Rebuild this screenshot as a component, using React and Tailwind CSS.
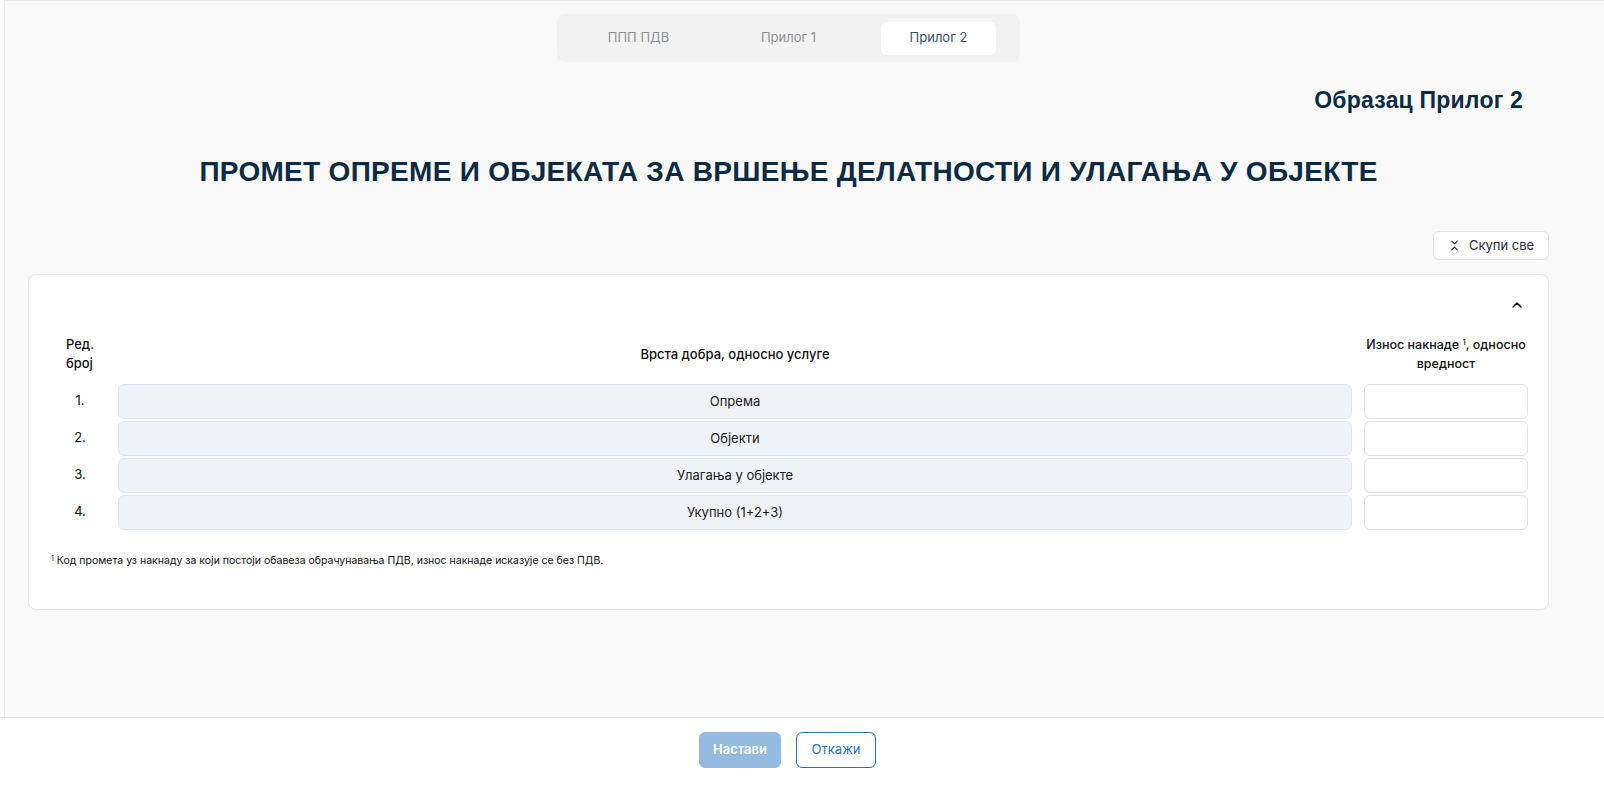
import React from "react";
import { ChevronsDownUp, ChevronUp } from "lucide-react";

const rows = [
  ["1.", "Опрема"],
  ["2.", "Објекти"],
  ["3.", "Улагања у објекте"],
  ["4.", "Укупно (1+2+3)"],
];

export default function App() {
  return (
    <div className="h-[787px] w-[1604px] flex flex-col bg-white overflow-hidden" style={{ fontFamily: "Inter, 'Liberation Sans', sans-serif" }}>
      <div className="flex-1 ml-[4px] border-l border-t border-[#ececec] bg-[#f9f9f9]">
        <div className="w-[1566px] pl-[23px] pr-[22px] flex flex-col">
          <div className="flex justify-center pt-[13px]">
            <div className="flex items-center gap-[35px] h-[48px] px-[24px] bg-[#f2f2f2] rounded-lg">
              <div className="w-[115px] h-[33px] flex items-center justify-center text-[13px] text-[#8c9196]">ППП ПДВ</div>
              <div className="w-[115px] h-[33px] flex items-center justify-center text-[13px] text-[#8c9196]">Прилог 1</div>
              <div className="w-[115px] h-[33px] flex items-center justify-center text-[13px] text-[#34526a] bg-white rounded-md">Прилог 2</div>
            </div>
          </div>
          <div className="flex justify-end pr-[26px] mt-[24px]">
            <h2 className="text-[23px] font-bold text-[#0b2b45] leading-[28px] tracking-[0.2px]" style={{ fontFamily: "'Liberation Sans', Arial, sans-serif" }}>Образац Прилог 2</h2>
          </div>
          <h1 className="text-center text-[28px] font-bold text-[#0b2b45] tracking-[0.3px] mt-[40px] leading-[36px]" style={{ fontFamily: "'Liberation Sans', Arial, sans-serif" }}>
            ПРОМЕТ ОПРЕМЕ И ОБЈЕКАТА ЗА ВРШЕЊЕ ДЕЛАТНОСТИ И УЛАГАЊА У ОБЈЕКТЕ
          </h1>
          <div className="flex justify-end mt-[41px]">
            <button className="h-[29px] w-[116px] flex items-center justify-center gap-[8px] bg-white border border-[#e3e3e3] rounded-md text-[13px] text-[#1d2b3a]">
              <ChevronsDownUp size={13} strokeWidth={2} className="text-[#1d2b3a]" />
              Скупи све
            </button>
          </div>
          <div className="mt-[14px] bg-white border border-[#e5e5e5] rounded-lg px-[20px] pt-[22px] pb-[40px]">
            <div className="flex justify-end">
              <ChevronUp size={16} strokeWidth={2.2} className="text-black mr-[3px]" />
            </div>
            <div className="flex items-center mt-[22px] text-[13px] font-medium text-[#111] leading-[19px]">
              <div className="w-[62px] flex justify-center"><div className="text-left">Ред.<br />број</div></div>
              <div className="flex-1 ml-[7px] text-center">Врста добра, односно услуге</div>
              <div className="w-[164px] ml-[12px] flex justify-center">
                <div className="text-center whitespace-nowrap text-[12.5px]">Износ накнаде <sup className="text-[8px]">1</sup>, односно<br />вредност</div>
              </div>
            </div>
            <div className="mt-[11px] flex flex-col gap-[2px]">
              {rows.map(([n, label]) => (
                <div key={n} className="flex items-center h-[35px]">
                  <div className="w-[62px] text-center text-[13px] text-[#111] pb-[2px]">{n}</div>
                  <div className="flex-1 ml-[7px] h-[35px] flex items-center justify-center bg-[#eff2f7] border border-[#e1e5ec] rounded-md text-[13px] text-[#1a1a1a]">{label}</div>
                  <div className="w-[164px] ml-[12px] h-[35px] bg-white border border-[#e0e0e0] rounded-md"></div>
                </div>
              ))}
            </div>
            <p className="mt-[23px] ml-[2px] text-[10.5px] text-[#111]">
              <sup className="text-[7px]">1</sup> Код промета уз накнаду за који постоји обавеза обрачунавања ПДВ, износ накнаде исказује се без ПДВ.
            </p>
          </div>
        </div>
      </div>
      <div className="h-[70px] border-t border-[#e2e2e2] bg-white">
        <div className="w-[1575px] flex justify-center gap-[15px] pt-[14px]">
          <button className="h-[36px] w-[82px] rounded-md bg-[#93badf] text-white text-[13px] font-semibold">Настави</button>
          <button className="h-[36px] w-[80px] rounded-md bg-white border border-[#2a6fb5] text-[#2a6fb5] text-[13px]">Откажи</button>
        </div>
      </div>
    </div>
  );
}
